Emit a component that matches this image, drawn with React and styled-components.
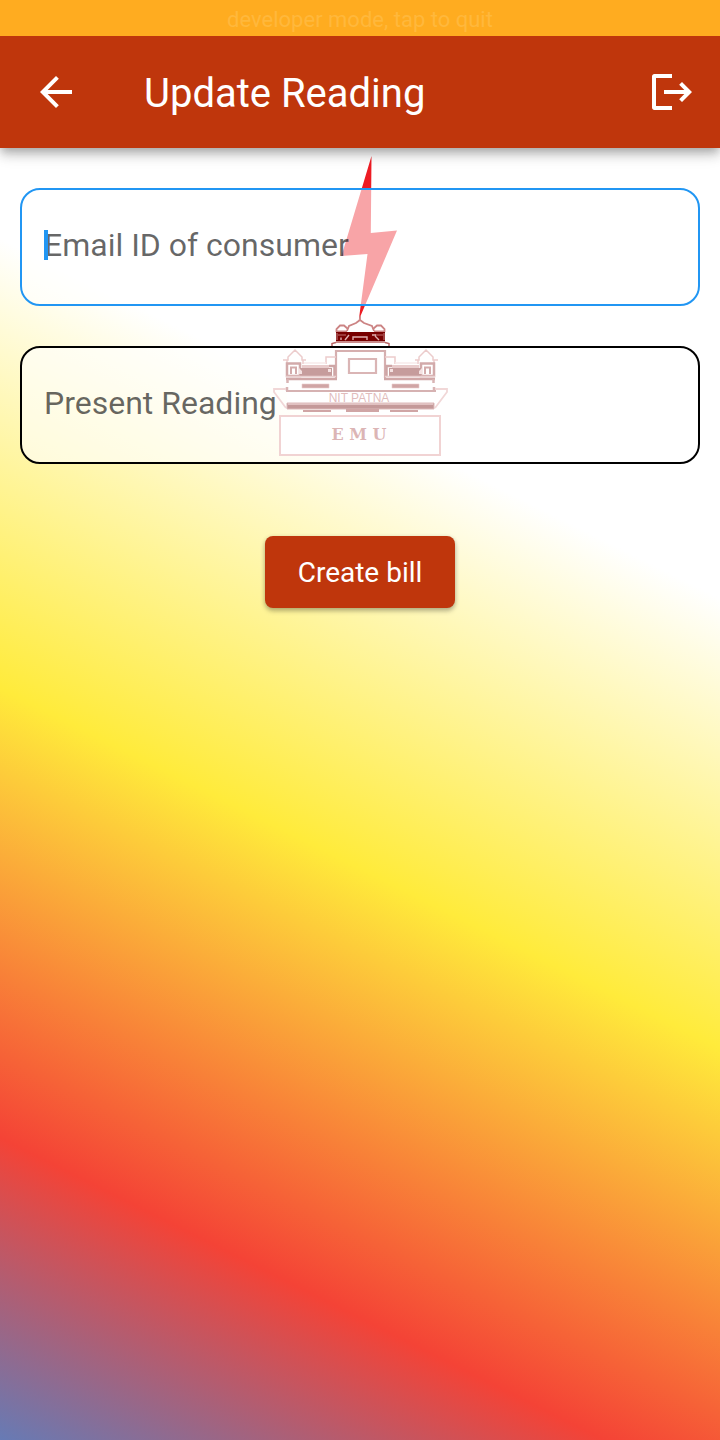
import React from "react";
import styled, { createGlobalStyle } from "styled-components";

const GlobalStyle = createGlobalStyle`
  *, *::before, *::after { box-sizing: border-box; }
  body {
    margin: 0;
    background: #fff;
    font-family: Roboto, "Liberation Sans", sans-serif;
  }
  button, input { font: inherit; }
`;

const Screen = styled.div`
  display: flex;
  flex-direction: column;
  min-height: 100vh;
`;

const DevBanner = styled.button`
  position: relative;
  z-index: 2;
  flex: none;
  height: 36px;
  padding: 4px 0 0;
  border: 0;
  background: #ffac20;
  color: #ffb83c;
  font-size: 22px;
  line-height: 32px;
  text-align: center;
`;

const AppBar = styled.header`
  position: relative;
  z-index: 1;
  flex: none;
  display: flex;
  align-items: center;
  height: 112px;
  padding: 0 16px;
  background: #bf360c;
  color: #fff;
  box-shadow: 0 4px 8px -2px rgba(0, 0, 0, 0.2), 0 8px 10px rgba(0, 0, 0, 0.14),
    0 2px 20px rgba(0, 0, 0, 0.12);
`;

const Title = styled.h1`
  flex: 1;
  margin: 0;
  padding: 4px 0 0 48px;
  font-size: 40px;
  font-weight: 400;
  line-height: 48px;
`;

const IconButton = styled.button`
  display: grid;
  place-items: center;
  width: 80px;
  height: 80px;
  padding: 0;
  border: 0;
  background: none;
  color: inherit;
`;

const LogoutButton = styled(IconButton)`
  width: 64px;
`;

const Body = styled.main`
  flex: 1;
  display: grid;
  grid-template-columns: minmax(0, 1fr);
  align-items: start;
  background: linear-gradient(26.565deg, #2196f3 0%, #f44336 25%, #ffeb3b 50%, #fff 75%, #fff 100%)
    0 0 / 100% 100vh no-repeat;
`;

const Logo = styled.svg`
  grid-area: 1 / 1;
  justify-self: center;
  width: 176px;
  height: 312px;
`;

const Form = styled.form`
  position: relative;
  grid-area: 1 / 1;
  display: flex;
  flex-direction: column;
  gap: 40px;
  padding: 40px 20px;
`;

const Field = styled.label`
  position: relative;
  display: block;
`;

const TextInput = styled.input`
  display: block;
  width: 100%;
  height: 118px;
  padding: 0 22px 4px;
  border: 2px solid ${(p) => (p.$active ? "#2196f3" : "#000")};
  border-radius: 20px;
  outline: 0;
  background: rgba(255, 255, 255, 0.6);
  color: #000;
  caret-color: #2196f3;
  font-size: 32px;

  &::placeholder {
    color: rgba(0, 0, 0, 0.6);
    opacity: 1;
  }
`;

const Caret = styled.span`
  position: absolute;
  top: 42px;
  left: 24px;
  width: 4px;
  height: 30px;
  background: #2196f3;
`;

const SubmitButton = styled.button`
  align-self: center;
  min-width: 190px;
  height: 72px;
  margin-top: 32px;
  padding: 0 32px;
  border: 0;
  border-radius: 8px;
  background: #bf360c;
  color: #fff;
  font-size: 28px;
  box-shadow: 0 3px 5px rgba(0, 0, 0, 0.26), 0 1px 5px rgba(0, 0, 0, 0.1);
`;

function BackIcon() {
  return (
    <svg width="48" height="48" viewBox="0 0 24 24" fill="currentColor" aria-hidden="true">
      <path d="M20 11H7.83l5.59-5.59L12 4l-8 8 8 8 1.41-1.41L7.83 13H20v-2z" />
    </svg>
  );
}

function LogoutIcon() {
  return (
    <svg width="48" height="48" viewBox="0 0 24 24" fill="currentColor" aria-hidden="true">
      <path d="M12 3H3.2C2.5 3 2 3.5 2 4.2v15.6c0 .7.5 1.2 1.2 1.2H12v-2H4V5h8z" />
      <path d="M17 7l-1.41 1.41L18.17 11H8v2h10.17l-2.58 2.58L17 17l5-5z" />
    </svg>
  );
}

/* One side wing of the building; the other side is its mirror image. */
function Wing() {
  return (
    <g>
      <g fill="none" stroke="#cf8080" strokeWidth="1.5">
        <path d="M283 360H288V357L291 354L295 350L299 354L302 357V360H306M287 360V364M303 360V364" />
        <path d="M326 364V357H336" />
        <path d="M304 363H326" stroke="#eccaca" />
      </g>
      <path d="M287 363.500H300V376H287Z" fill="#fff" stroke="#8f2b2b" strokeWidth="2.5" />
      <path d="M291 374V367.500H296V374" fill="none" stroke="#922f2f" strokeWidth="2" />
      <path d="M300 368H332V376H300Z" fill="#700808" />
      <path d="M302 365H329V368H302Z" fill="#c88080" />
      <path d="M299 368L302 371V374H299Z M328 369H331V372H328Z" fill="#e3b5b5" />
      <path d="M329 366H334.500V376" fill="none" stroke="#842020" strokeWidth="2.5" />
      <path d="M286 376.500H336" stroke="#cb8a8a" strokeWidth="1.500" />
      <path d="M286 379H337" stroke="#8a2424" strokeWidth="2.500" />
      <path d="M287.500 379V383M287 387V391" stroke="#a04545" strokeWidth="2.500" />
      <path d="M302 384H329V388H302Z" fill="#8a2020" stroke="#cf8080" strokeWidth="0.600" />
      <path d="M286 389H274V392L286 408" fill="none" stroke="#dc9c9c" strokeWidth="1.8" />
      <path d="M303 410H331V412H303Z" fill="#8a2020" />
    </g>
  );
}

function BrandLogo() {
  return (
    <Logo viewBox="272 148 176 312" role="img" aria-label="NIT Patna EMU">
      <path d="M371.5 156L341.5 256L367.5 254L358.8 320L397 230.5L370.8 233Z" fill="#ed1c24" />
      <path d="M287 376H336V348H384V376H436V409H287Z" fill="#fff" />
      <g fill="none" stroke="#cc8484" strokeWidth="1.8">
        <path d="M360 316V320L356 323L349 326L347 331M360 320L364 323L372 326L374 331" />
        <path d="M336.500 332V329L340 325.500H344L348 329M384.500 332V329L381 325.500H377L373 329" />
        <path d="M336 331.500H347M374 331.500H385" />
      </g>
      <path d="M336 332H385V341H336Z" fill="#780000" />
      <path d="M337 333V340M384 333V340M338 335H346M375 335H383" fill="none" stroke="#bd7070" strokeWidth="1.2" />
      <path d="M341 340V337.500M345 340L349 335M376 335L372 335M375 336L379 340M353 340V337H367V340" fill="none" stroke="#dfb0b0" strokeWidth="1.4" />
      <path d="M336 342.500L332 343.500V347H336M385 342.500L389 343.500V347H385M336 342H385" fill="none" stroke="#b86464" strokeWidth="1.5" />
      <path d="M336 378V351H385V378" fill="#fff" stroke="#983838" strokeWidth="2.2" />
      <path d="M349 359H376V373H349Z" fill="none" stroke="#a24848" strokeWidth="2.2" />
      <Wing />
      <g transform="translate(721 0) scale(-1 1)">
        <Wing />
      </g>
      <path d="M286 391H436" stroke="#984040" strokeWidth="2" />
      <path d="M287 403H434V409H287Z" fill="#6c0000" stroke="#a95050" strokeWidth="1" />
      <path d="M288 404H433" stroke="#b46565" strokeWidth="2" />
      <path d="M346 409H379V412H346Z" fill="#8a2020" />
      <text
        x="359"
        y="402"
        textAnchor="middle"
        fill="#b45858"
        fontFamily="'Liberation Sans', sans-serif"
        fontSize="12"
      >
        NIT PATNA
      </text>
      <path d="M280 416H440V455H280Z" fill="#fff" stroke="#dc9292" strokeWidth="2" />
      <text
        x="359"
        y="440"
        textAnchor="middle"
        fill="#a84848"
        fontFamily="'DejaVu Serif', serif"
        fontSize="16"
        fontWeight="700"
      >
        E M U
      </text>
    </Logo>
  );
}

export default function App() {
  return (
    <>
      <GlobalStyle />
      <Screen>
        <DevBanner type="button">developer mode, tap to quit</DevBanner>
        <AppBar>
          <IconButton type="button" aria-label="Back">
            <BackIcon />
          </IconButton>
          <Title>Update Reading</Title>
          <LogoutButton type="button" aria-label="Log out">
            <LogoutIcon />
          </LogoutButton>
        </AppBar>
        <Body>
          <BrandLogo />
          <Form onSubmit={(event) => event.preventDefault()}>
            <Field>
              <TextInput $active type="email" placeholder="Email ID of consumer" aria-label="Email ID of consumer" />
              <Caret />
            </Field>
            <Field>
              <TextInput type="text" inputMode="numeric" placeholder="Present Reading" aria-label="Present Reading" />
            </Field>
            <SubmitButton type="submit">Create bill</SubmitButton>
          </Form>
        </Body>
      </Screen>
    </>
  );
}
